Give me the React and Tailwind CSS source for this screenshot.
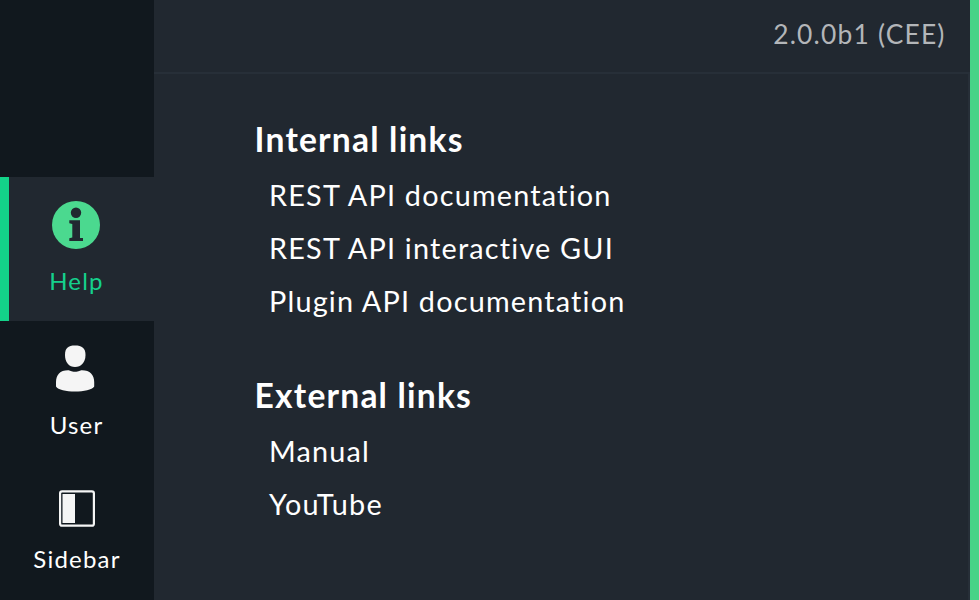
function NavItem({ label, active, className, children, labelClass }) {
  return (
    <div className={`flex flex-col items-center w-[154px] ${active ? "bg-[#212830] text-[#15d18c]" : "text-white"} ${className}`}>
      {children}
      <span className={`text-[24px] leading-[30px] tracking-[1.2px] whitespace-nowrap ${labelClass}`}>{label}</span>
    </div>
  );
}

function Section({ title, links, className }) {
  return (
    <section className={className}>
      <h2 className="text-[33.6px] leading-[42px] font-bold tracking-[1.2px]">{title}</h2>
      <ul className="pl-[14.4px] pt-[9px]">
        {links.map((l) => (
          <li key={l} className="text-[28.8px] h-[53px] leading-[53px] tracking-[1.2px] whitespace-nowrap">{l}</li>
        ))}
      </ul>
    </section>
  );
}

export default function App() {
  return (
    <div className="flex w-[979px] h-[600px] overflow-hidden bg-[#212830] text-white font-['Lato',sans-serif]">
      <nav className="w-[154px] h-full bg-[#11181e] pt-[177px] shrink-0">
        <NavItem label="Help" active className="h-[144px] pt-[24px] border-l-[9px] border-[#13d389] pr-[11px]" labelClass="mt-[17px] ml-[1px]">
          <svg width="48" height="48" viewBox="0 0 48 48" className="shrink-0">
            <circle cx="24" cy="24" r="24" fill="#4bd98f" />
            <circle cx="24" cy="11.8" r="5.2" fill="#212830" />
            <path d="M17.3 19.3H28V37H31V40H17.3V37.3L20.3 36.6V23L17.3 22.3Z" fill="#212830" />
          </svg>
        </NavItem>
        <NavItem label="User" className="h-[144px] pt-[24px] pr-[4px]" labelClass="mt-[17px] ml-[3px]">
          <svg width="40" height="48" viewBox="0 0 40 48" className="shrink-0">
            <path d="M20 .5C27 .5 30.500 3 30.500 10C30.500 17.500 26 22 20 22C14 22 10 17.500 10 10C10 3 13 .5 20 .5Z" fill="#f5f5f5" />
            <path d="M13 25.300C15 25.300 16 26.800 20 26.800C24 26.800 25 25.300 27 25.300C35 25.300 39.200 30 39.200 37V41.500C37 45 29 46.500 20 46.500C11 46.500 3 45 1 41.500V37C1 30 5 25.300 13 25.300Z" fill="#f5f5f5" />
          </svg>
        </NavItem>
        <NavItem label="Sidebar" className="h-[135px] pt-[25px]" labelClass="mt-[17px]">
          <svg width="36" height="37" viewBox="0 0 36 37" className="shrink-0">
            <rect x="1.100" y="1.300" width="33.800" height="34.400" rx="2" fill="none" stroke="#f5f5f5" strokeWidth="2.200" />
            <rect x="3.500" y="4" width="12.500" height="29" fill="#f5f5f5" />
          </svg>
        </NavItem>
      </nav>
      <main className="w-[816px] h-full shrink-0">
        <header className="h-[74px] border-b-2 border-[#272f38] flex justify-end pr-[24.4px] pt-[17px] text-[26.4px] leading-[34px] tracking-[1.2px] text-[#b3b6b9]">2.0.0b1 (CEE)</header>
        <div className="h-[526px] border-r-2 border-[#272f38] pl-[100.6px] pt-[44px]">
          <Section title="Internal links" links={["REST API documentation", "REST API interactive GUI", "Plugin API documentation"]} />
          <Section className="mt-[46px]" title="External links" links={["Manual", "YouTube"]} />
        </div>
      </main>
      <div className="w-[9px] h-full bg-[#47d387] shrink-0" />
    </div>
  );
}
